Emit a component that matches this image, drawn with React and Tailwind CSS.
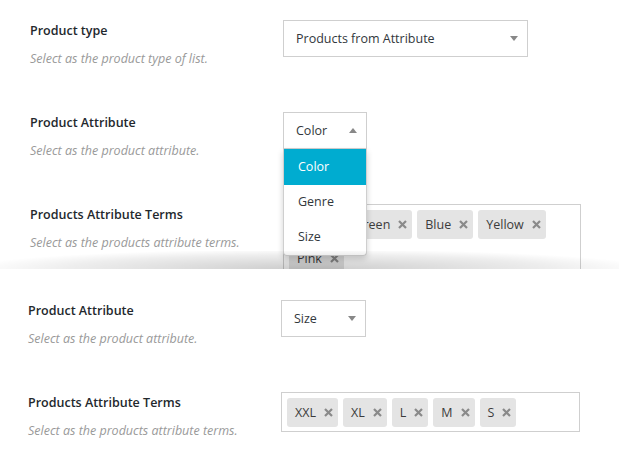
import React from "react";

function Arrow({ up = false }) {
  return (
    <svg width="8" height="5" viewBox="0 0 8 5" className="shrink-0">
      {up ? <path d="M0 5 L4 0 L8 5 Z" fill="#888" /> : <path d="M0 0 L8 0 L4 5 Z" fill="#888" />}
    </svg>
  );
}

function XIcon() {
  return (
    <svg width="9" height="9" viewBox="0 0 9 9" className="shrink-0">
      <path d="M1 1 L8 8 M8 1 L1 8" stroke="#8a8a8a" strokeWidth="2.2" strokeLinecap="butt" />
    </svg>
  );
}

function Tag({ label }) {
  return (
    <div className="h-[29px] flex items-center bg-[#e4e4e4] rounded-[3px] pl-[8px] pr-[5px] gap-[8px] text-[12.5px] text-[#3c3c3c]">
      <span className="pt-[1px]">{label}</span>
      <XIcon />
    </div>
  );
}

function Label({ title, desc }) {
  return (
    <div className="w-[253px] shrink-0 pt-[2px]">
      <div className="text-[12.5px] leading-[18px] font-semibold text-[#23282d]">{title}</div>
      <div className="mt-[10px] text-[12.5px] leading-[18px] italic text-[#999]">{desc}</div>
    </div>
  );
}

function Select({ value, width, up = false }) {
  return (
    <div
      className={`h-[37px] border border-[#cfcfcf] bg-white flex items-center justify-between pl-[12px] pr-[9px] text-[12.5px] text-[#32373c] ${width}`}
    >
      <span className="pt-[1px]">{value}</span>
      <Arrow up={up} />
    </div>
  );
}

export default function App() {
  return (
    <div className="w-[619px] h-[460px] bg-white overflow-hidden font-['Open_Sans',sans-serif]">
      {/* Top panel */}
      <div className="relative h-[269px] overflow-hidden pl-[30px] pt-[20px]">
        <div className="flex h-[92px]">
          <Label title="Product type" desc="Select as the product type of list." />
          <Select value="Products from Attribute" width="w-[245px]" />
        </div>
        <div className="flex h-[92px]">
          <Label title="Product Attribute" desc="Select as the product attribute." />
          <div className="relative">
            <Select value="Color" width="w-[84px]" up />
            <div className="absolute left-0 top-[37px] z-10 w-[84px] bg-white border border-[#cfcfcf] border-t-0 rounded-b-[4px] shadow-[0_3px_6px_rgba(0,0,0,0.18)] text-[12.5px] text-[#32373c]">
              <div className="h-[36px] flex items-center pl-[14px] bg-[#00acd0] text-white">Color</div>
              <div className="h-[35px] flex items-center pl-[14px]">Genre</div>
              <div className="h-[35px] flex items-center pl-[14px]">Size</div>
            </div>
          </div>
        </div>
        <div className="flex">
          <Label title="Products Attribute Terms" desc="Select as the products attribute terms." />
          <div className="w-[298px] h-[90px] border border-[#cfcfcf] p-[5px] flex flex-wrap content-start gap-[5px]">
            <Tag label="Red" />
            <Tag label="Green" />
            <Tag label="Blue" />
            <Tag label="Yellow" />
            <Tag label="Pink" />
          </div>
        </div>
        <div className="absolute left-0 right-0 bottom-0 h-[18px] z-20 bg-[radial-gradient(ellipse_at_bottom,rgba(0,0,0,0.2),rgba(0,0,0,0.07)_55%,transparent_78%)]" />
      </div>

      {/* Bottom panel */}
      <div className="pl-[28px] pt-[31px]">
        <div className="flex h-[92px]">
          <Label title="Product Attribute" desc="Select as the product attribute." />
          <Select value="Size" width="w-[85px]" />
        </div>
        <div className="flex">
          <Label title="Products Attribute Terms" desc="Select as the products attribute terms." />
          <div className="w-[299px] h-[40px] border border-[#cfcfcf] p-[5px] flex flex-wrap content-start gap-[5px]">
            <Tag label="XXL" />
            <Tag label="XL" />
            <Tag label="L" />
            <Tag label="M" />
            <Tag label="S" />
          </div>
        </div>
      </div>
    </div>
  );
}
